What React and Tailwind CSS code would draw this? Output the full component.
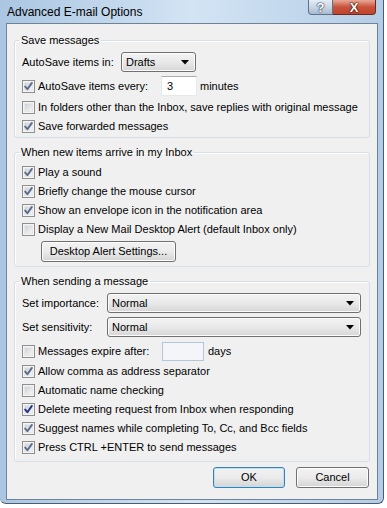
import React from 'react';

const font = { fontFamily: '"Liberation Sans", Arial, sans-serif' };

const CheckBox = ({ checked, dark }) => (
    <svg width="13" height="13" viewBox="0 0 13 13" className="shrink-0">
        <defs>
            <linearGradient id="cbfill" x1="0" y1="0" x2="1" y2="1">
                <stop offset="0" stopColor="#cbcfd5" />
                <stop offset="1" stopColor="#f7f7f7" />
            </linearGradient>
        </defs>
        <rect x="0.5" y="0.5" width="12" height="12" fill="#f4f4f4" stroke="#8e8f8f" />
        <rect x="2.5" y="2.5" width="8" height="8" fill="url(#cbfill)" stroke="#e8e8e8" />
        {checked && (
            <path d="M3.2 6.6 L5.4 9.2 L9.9 2.9" fill="none" stroke={dark ? '#21338a' : '#5b6b8c'} strokeWidth="1.9" strokeLinecap="round" strokeLinejoin="round" />
        )}
    </svg>
);

const CheckRow = ({ label, checked, dark, children, className = '', labelClass = '' }) => (
    <div className={`h-[19px] flex items-center ${className}`}>
        <CheckBox checked={checked} dark={dark} />
        <span className={`ml-[3px] whitespace-nowrap ${labelClass}`}>{label}</span>
        {children}
    </div>
);

const Combo = ({ value, className = '' }) => (
    <div className={`h-[20px] flex items-center rounded-[3px] border border-[#707070] bg-gradient-to-b from-[#f3f3f3] via-[#e9e9e9] to-[#d6d6d6] shadow-[inset_0_0_0_1px_#fbfbfb] pl-[4px] pr-[6px] ${className}`}>
        <span className="flex-1">{value}</span>
        <svg width="8" height="5" viewBox="0 0 8 5"><path d="M0 0 H8 L4 4.5 Z" fill="#000" /></svg>
    </div>
);

const Button = ({ label, primary, className = '' }) => (
    <div className={`h-[21px] flex items-center justify-center rounded-[3px] border bg-gradient-to-b from-[#f2f2f2] via-[#ebebeb] to-[#d4d4d4] ${primary ? 'border-[#3c7fb1] shadow-[inset_0_0_0_1px_#b8e2f8]' : 'border-[#707070] shadow-[inset_0_0_0_1px_#fcfcfc]'} ${className}`}>
        {label}
    </div>
);

const Group = ({ title, children, className = '' }) => (
    <fieldset className={`mx-[7px] w-[356px] min-w-0 border border-[#d5dfe5] rounded-[3px] pl-[7px] pr-[7px] shadow-[inset_1px_1px_0_#ffffff] ${className}`}>
        <legend className="ml-[-3px] px-[2px] h-[16px] leading-[16px]">{title}</legend>
        {children}
    </fieldset>
);

export default function App() {
    return (
        <div className="w-[387px] h-[508px] bg-white overflow-hidden text-[11px] text-black" style={font}>
            <div className="w-[384px] h-[504px] rounded-b-[6px] border-r border-b border-[#4a5d72] bg-gradient-to-r from-[#aac6e2] via-[#d3e4f4] to-[#b4cde6] flex flex-col">
                {/* title bar */}
                <div className="h-[23px] flex items-start">
                    <div className="pl-[7px] pt-[3px] text-[12px] text-black">Advanced E-mail Options</div>
                    <div className="ml-auto mr-[7px] flex h-[15px]">
                        <div className="w-[25px] h-[15px] rounded-bl-[4px] border border-[#5e7288] border-t-0 bg-gradient-to-b from-[#e6edf5] via-[#c9d6e4] to-[#a9bbcf] flex items-center justify-center text-[13px] font-bold text-white leading-none" style={{ textShadow: '0 0 1px #33465c, 0 0 1px #33465c, 0 0 2px #33465c' }}>?</div>
                        <div className="w-[43px] h-[15px] rounded-br-[4px] border border-[#6b2a20] border-t-0 border-l-0 bg-gradient-to-b from-[#e9a898] via-[#c9523b] to-[#c0452c] flex items-center justify-center text-[13px] font-bold text-white leading-none" style={{ textShadow: '0 0 1px #3d0e06, 0 0 1px #3d0e06, 0 0 2px #3d0e06' }}>X</div>
                    </div>
                </div>
                {/* client area */}
                <div className="ml-[6px] w-[372px] h-[477px] border border-[#6f8297] bg-[#f0f0f0] flex flex-col">
                    <Group title="Save messages" className="mt-[8px]">
                        <div className="pt-[4px] pb-[1px]">
                            <div className="h-[20px] flex items-center">
                                <span className="w-[99px] whitespace-nowrap">AutoSave items in:</span>
                                <Combo value="Drafts" className="w-[75px]" />
                            </div>
                            <CheckRow label="AutoSave items every:" checked className="mt-[4px] h-[20px]" labelClass="w-[123px]">
                                <div className="w-[36px] h-[20px] flex items-center bg-white border border-[#e3e9ef] border-t-[#abadb3] pl-[5px]">3</div>
                                <span className="ml-[3px]">minutes</span>
                            </CheckRow>
                            <CheckRow label="In folders other than the Inbox, save replies with original message" className="mt-[2px]" />
                            <CheckRow label="Save forwarded messages" checked />
                        </div>
                    </Group>

                    <Group title="When new items arrive in my Inbox" className="mt-[6px]">
                        <div className="pt-[3px] pb-[4px]">
                            <CheckRow label="Play a sound" checked />
                            <CheckRow label="Briefly change the mouse cursor" checked />
                            <CheckRow label="Show an envelope icon in the notification area" checked />
                            <CheckRow label="Display a New Mail Desktop Alert (default Inbox only)" />
                            <Button label="Desktop Alert Settings..." className="mt-[2px] ml-[19px] w-[135px]" />
                        </div>
                    </Group>

                    <Group title="When sending a message" className="mt-[6px]">
                        <div className="pt-[4px] pb-[4px]">
                            <div className="h-[20px] flex items-center">
                                <span className="w-[85px]">Set importance:</span>
                                <Combo value="Normal" className="w-[254px]" />
                            </div>
                            <div className="h-[20px] mt-[4px] flex items-center">
                                <span className="w-[85px]">Set sensitivity:</span>
                                <Combo value="Normal" className="w-[254px]" />
                            </div>
                            <div className="h-[19px] mt-[5px] flex items-center">
                                <CheckBox />
                                <span className="ml-[3px] w-[124px]">Messages expire after:</span>
                                <div className="w-[42px] h-[19px] border border-[#b3c7db] bg-[#f3f5f8]" />
                                <span className="ml-[4px]">days</span>
                            </div>
                            <CheckRow label="Allow comma as address separator" checked className="mt-[1px]" />
                            <CheckRow label="Automatic name checking" />
                            <CheckRow label="Delete meeting request from Inbox when responding" checked dark />
                            <CheckRow label="Suggest names while completing To, Cc, and Bcc fields" checked />
                            <CheckRow label="Press CTRL +ENTER to send messages" checked />
                        </div>
                    </Group>

                    <div className="mt-[5px] flex justify-end gap-[11px] mr-[8px]">
                        <Button label="OK" primary className="w-[72px]" />
                        <Button label="Cancel" className="w-[73px]" />
                    </div>
                </div>
            </div>
        </div>
    );
}
